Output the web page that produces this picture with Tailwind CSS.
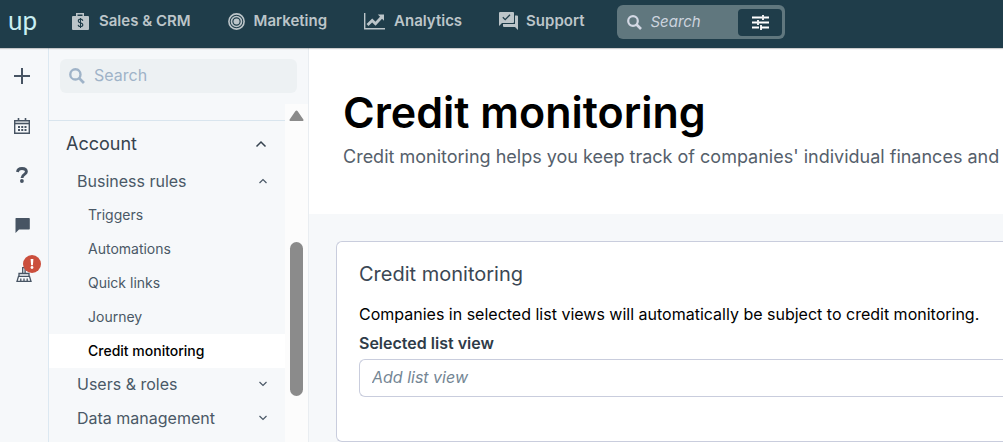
<!DOCTYPE html>
<html lang="en">
<head>
<meta charset="utf-8">
<meta name="viewport" content="width=device-width, initial-scale=1">
<title>Credit monitoring</title>
<script src="https://cdn.jsdelivr.net/npm/@tailwindcss/browser@4"></script>
</head>
<body class="flex h-screen flex-col overflow-hidden bg-[#f6f8fa] font-['Inter',sans-serif] text-[#4a5866]">

<header class="z-10 flex h-12 shrink-0 items-center bg-[#1f3d4a] pb-1 shadow-[0_1px_1px_rgba(0,0,0,0.2)]">
  <a href="#" class="w-[72px] shrink-0 pb-1 pl-2 font-['Lato',sans-serif] text-[26px] leading-8 text-[#c9eff2]" aria-label="up home">up</a>
  <nav class="flex shrink-0 items-center gap-[37px] pb-0.5 text-[15px] leading-6 font-semibold text-[#bcc5c9]">
    <a href="#" class="flex items-center gap-2.5">
      <svg class="h-[17px] w-[17px]" viewBox="0 0 17 17" fill="currentColor"><path fill-rule="evenodd" d="M4 3V0h8v3h4a1 1 0 0 1 1 1v12a1 1 0 0 1-1 1H1a1 1 0 0 1-1-1V4a1 1 0 0 1 1-1zM5.500 3h5V1.500h-5z"/><path d="M8.500 5v10" fill="none" stroke="#1f3d4a" stroke-width="1"/><path d="M10.800 7.800C10.500 6.600 9.600 6.200 8.500 6.200S6.300 6.700 6.300 7.900c0 2.600 4.500 1.300 4.500 3.900 0 1.200-1 1.800-2.300 1.800s-2.200-.6-2.400-1.800" fill="none" stroke="#1f3d4a" stroke-width="1.200"/></svg>
      Sales &amp; CRM</a>
    <a href="#" class="flex items-center gap-[9px]">
      <svg class="h-[17px] w-[17px]" viewBox="0 0 17 17" fill="none" stroke="currentColor"><circle cx="8.500" cy="8.500" r="7.600" stroke-width="1.600"/><circle cx="8.500" cy="8.500" r="5" stroke-width="1.600"/><circle cx="8.500" cy="8.500" r="3" fill="currentColor" stroke="none"/></svg>
      Marketing</a>
    <a href="#" class="flex items-center gap-[9px]">
      <svg class="h-[17px] w-[21px]" viewBox="0 0 21 17" fill="none" stroke="currentColor"><path d="M.7 0v15.800H21" stroke-width="1.400"/><path d="M3.500 12l4.700-4.500 3.300 3.300 6-6.500" stroke-width="2.800"/><path d="M13.800 1.500H20v6.200z" fill="currentColor" stroke="none"/></svg>
      Analytics</a>
    <a href="#" class="flex items-center gap-2">
      <svg class="h-[18px] w-[19px]" viewBox="0 0 19 18" fill="currentColor"><path d="M1 0h13a1 1 0 0 1 1 1v9a1 1 0 0 1-1 1H3l-3 3V1a1 1 0 0 1 1-1z"/><path d="M16 3.500h2a1 1 0 0 1 1 1V18l-3-3H5a1 1 0 0 1-1-1v-2h12z"/><path d="M3.800 5.200l2.400 2.400 4.800-4.800" fill="none" stroke="#1f3d4a" stroke-width="1.300"/></svg>
      Support</a>
  </nav>
  <form class="ml-[33px] flex h-[34px] w-[168px] shrink-0 items-center rounded-md bg-[#60777e] p-[3px] pl-2.5" role="search">
    <svg class="h-[15px] w-[15px] shrink-0" viewBox="0 0 15 15" fill="none" stroke="#d3d8e4" stroke-width="2.200"><circle cx="6" cy="6" r="4.800"/><path d="M9.500 9.500L14 14" stroke-width="2.600"/></svg>
    <input type="text" aria-label="Search everything" placeholder="Search" class="ml-2 w-0 min-w-0 grow bg-transparent text-[15px] leading-6 italic outline-none placeholder:text-[#cdd4de]">
    <button type="button" aria-label="Search filters" class="flex h-[27px] w-11 shrink-0 items-center justify-center rounded-sm bg-[#1f3d4a]">
      <svg class="h-[15px] w-[17px]" viewBox="0 0 17 15" fill="none" stroke="#fff" stroke-width="1.800"><path d="M0 2.500h10M12 2.500h5M11 0v5M0 7.500h5M7 7.500h10M6 5v5M0 12.500h7M9 12.500h8M9 10v5"/></svg>
    </button>
  </form>
</header>

<div class="flex min-h-0 grow">
  <nav aria-label="Shortcuts" class="flex w-[49px] shrink-0 flex-col items-center border-r border-[#dce8f1] pt-5 pr-1 text-[#475463]">
    <button type="button" aria-label="Add" class="flex h-4 items-center"><svg class="h-4 w-4" viewBox="0 0 16 16" stroke="currentColor" stroke-width="2"><path d="M8 0v16M0 8h16"/></svg></button>
    <button type="button" aria-label="Calendar" class="mt-[34px] flex h-4 items-center"><svg class="h-4 w-4" viewBox="0 0 16 16" fill="none" stroke="currentColor"><path d="M.7 2.700h14.600v12.600H.7z" stroke-width="1.400"/><path d="M0 5.500h16" stroke-width="1.600"/><path d="M4.500 0v3M11.500 0v3" stroke-width="1.600"/><path d="M4 9h8.500M4 12h8.500" stroke-width="1.800" stroke-dasharray="2 1.250"/></svg></button>
    <button type="button" aria-label="Help" class="mt-[33px] flex h-4 items-center"><svg class="h-4 w-3" viewBox="0 0 12 16" fill="none" stroke="currentColor" stroke-width="2.900"><path d="M1.500 5C1.700 2.800 3.300 1.500 6 1.500S10.400 2.900 10.400 4.800C10.400 7.600 6 7.200 6 10.900"/><circle cx="5.900" cy="14" r="1.900" fill="currentColor" stroke="none"/></svg></button>
    <button type="button" aria-label="Messages" class="mt-[34px] flex h-4 items-center"><svg class="h-[15px] w-[15px]" viewBox="0 0 15 15" fill="currentColor"><path d="M1 0h13a.8.8 0 0 1 .8.800v10a.8.8 0 0 1-.8.800H4L.5 15V.8A.8.8 0 0 1 1 0z"/></svg></button>
    <button type="button" aria-label="Clean up, needs attention" class="relative mt-[33px] flex h-4 items-center pl-1">
      <svg class="h-[15px] w-4" viewBox="0 0 16 15" fill="none" stroke="currentColor" stroke-width="1.300"><path d="M6.700 6V.7h2.400V6M3 9.300V6.500h10v2.800M2.500 9.300h11l1.500 5H1zM4.800 11.500v2.500M8 11.500v2.500M11.200 11.500v2.500"/></svg>
      <svg class="absolute -top-[11px] left-[11px] h-[18px] w-[18px]" viewBox="0 0 18 18"><circle cx="9" cy="9" r="9" fill="#cb4f3d"/><path d="M7.600 4h2.800l-.5 6.300H8.100z" fill="#fff"/><circle cx="9" cy="12.500" r="1.400" fill="#fff"/></svg>
    </button>
  </nav>

  <aside class="flex w-[260px] shrink-0 flex-col border-r border-[#e9edf1]">
    <label class="mt-[11px] mr-[11px] ml-[11px] flex h-[34px] shrink-0 items-center rounded-md bg-[#edf1f3] pl-[9px]">
      <svg class="h-4 w-4 shrink-0" viewBox="0 0 15 15" fill="none" stroke="#9fb3c8" stroke-width="2.200"><circle cx="6" cy="6" r="4.800"/><path d="M9.500 9.500L14 14" stroke-width="2.600"/></svg>
      <input type="text" aria-label="Search settings" placeholder="Search" class="ml-[9px] w-0 min-w-0 grow bg-transparent pb-0.5 text-base leading-6 outline-none placeholder:text-[#9fb3c8]">
    </label>
    <div class="mt-[11px] flex min-h-0 grow">
      <nav aria-label="Settings" class="min-w-0 grow pt-4">
        <div class="border-t border-[#d9e5ee]">
          <button type="button" aria-expanded="true" class="flex w-full items-center justify-between pt-[11px] pr-[18px] pb-2 pl-[17px] text-lg leading-6 text-[#36434f]">Account
            <svg class="h-3 w-3" viewBox="0 0 12 12" fill="none" stroke="currentColor" stroke-width="1.500"><path d="M1.500 8.500L6 4l4.500 4.500"/></svg></button>
          <button type="button" aria-expanded="true" class="flex h-[34px] w-full items-center justify-between pr-[17px] pl-7 text-base leading-6">Business rules
            <svg class="h-2.5 w-2.5" viewBox="0 0 10 10" fill="none" stroke="currentColor" stroke-width="1.200"><path d="M1.500 7L5 3.500 8.500 7"/></svg></button>
          <ul class="text-sm leading-[34px]">
            <li><a href="#" class="block pl-[39px]">Triggers</a></li>
            <li><a href="#" class="block pl-[39px]">Automations</a></li>
            <li><a href="#" class="block pl-[39px]">Quick links</a></li>
            <li><a href="#" class="block pl-[39px]">Journey</a></li>
            <li><a href="#" aria-current="page" class="block bg-white pl-[39px] font-medium text-black">Credit monitoring</a></li>
          </ul>
          <button type="button" aria-expanded="false" class="flex h-[34px] w-full items-center justify-between pr-[17px] pb-0.5 pl-7 text-base leading-6">Users &amp; roles
            <svg class="h-2.5 w-2.5" viewBox="0 0 10 10" fill="none" stroke="currentColor" stroke-width="1.200"><path d="M1.500 3L5 6.500 8.500 3"/></svg></button>
          <button type="button" aria-expanded="false" class="flex h-[34px] w-full items-center justify-between pr-[17px] pb-0.5 pl-7 text-base leading-6">Data management
            <svg class="h-2.5 w-2.5" viewBox="0 0 10 10" fill="none" stroke="currentColor" stroke-width="1.200"><path d="M1.500 3L5 6.500 8.500 3"/></svg></button>
        </div>
      </nav>
      <div class="flex w-[23px] shrink-0 flex-col items-center bg-[#fcfcfc] pt-1.5" aria-hidden="true">
        <svg class="h-3 w-[15px] shrink-0" viewBox="0 0 15 12"><path d="M6.300 1.300a1.500 1.500 0 0 1 2.400 0l5.500 8a1 1 0 0 1-.8 1.700H1.600a1 1 0 0 1-.8-1.700z" fill="#8b8b8b"/></svg>
        <div class="mt-[120px] h-[154px] w-[13px] shrink-0 rounded-full bg-[#8b8b8b]"></div>
      </div>
    </div>
  </aside>

  <main class="min-w-0 grow">
    <div class="bg-white pt-[35px] pb-[43px] pl-[34px]">
      <h1 class="text-[43px] leading-[58px] font-semibold whitespace-nowrap text-black">Credit monitoring</h1>
      <p class="mt-0.5 text-lg leading-7 whitespace-nowrap text-[#55606b]">Credit monitoring helps you keep track of companies' individual finances and</p>
    </div>
    <section class="mt-[27px] ml-[27px] rounded-l-md border border-r-0 border-[#c9cddd] bg-white pt-[18px] pb-11 pl-[22px]">
      <h2 class="text-xl leading-7 text-[#3b4754]">Credit monitoring</h2>
      <p class="mt-3.5 text-base leading-6 whitespace-nowrap text-black">Companies in selected list views will automatically be subject to credit monitoring.</p>
      <label for="list-view" class="mt-[5px] block text-base leading-6 font-semibold text-[#2f3b48]">Selected list view</label>
      <input id="list-view" type="text" placeholder="Add list view" class="mt-1 block h-[38px] w-full rounded-l-md border border-r-0 border-[#c9cddd] bg-white pb-0.5 pl-3 text-base italic outline-none placeholder:text-[#748694]">
    </section>
  </main>
</div>
</body>
</html>
